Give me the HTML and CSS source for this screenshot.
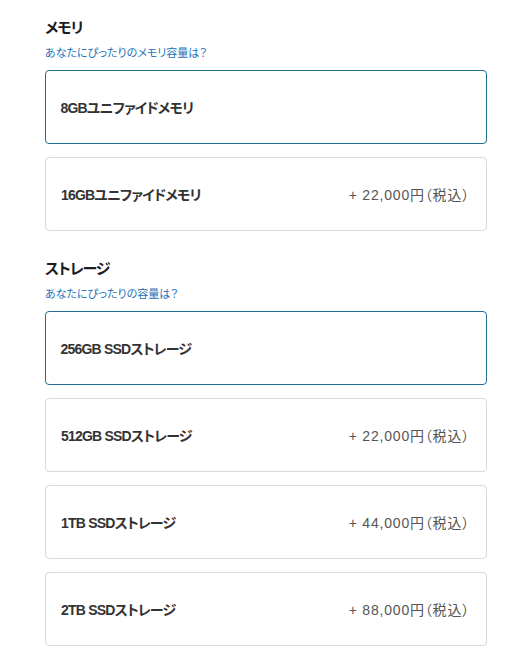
FILE: index.html
```html
<!DOCTYPE html>
<html lang="ja">
<head>
<meta charset="utf-8">
<link rel="stylesheet" href="styles.css">
</head>
<body>
<div class="page">
  <section class="group">
    <h2 class="title">メモリ</h2>
    <a class="help" href="#">あなたにぴったりのメモリ容量は？</a>
    <div class="options">
      <div class="opt selected"><span class="name">8GBユニファイドメモリ</span></div>
      <div class="opt"><span class="name">16GBユニファイドメモリ</span><span class="price">+ 22,000円（税込）</span></div>
    </div>
  </section>
  <section class="group">
    <h2 class="title">ストレージ</h2>
    <a class="help" href="#">あなたにぴったりの容量は？</a>
    <div class="options">
      <div class="opt selected"><span class="name">256GB SSDストレージ</span></div>
      <div class="opt"><span class="name">512GB SSDストレージ</span><span class="price">+ 22,000円（税込）</span></div>
      <div class="opt"><span class="name">1TB SSDストレージ</span><span class="price">+ 44,000円（税込）</span></div>
      <div class="opt"><span class="name">2TB SSDストレージ</span><span class="price">+ 88,000円（税込）</span></div>
    </div>
  </section>
</div>
</body>
</html>
```
FILE: styles.css
```css
html, body {
  margin: 0;
  padding: 0;
  background: #fff;
}
body {
  font-family: "Liberation Sans", "Noto Sans CJK JP", sans-serif;
  color: #1d1d1f;
}
.page {
  padding: 18px 38px 0 45px;
}
.group {
  display: flex;
  flex-direction: column;
  margin-bottom: 28px;
}
.title {
  margin: 0;
  font-size: 15px;
  font-weight: 700;
  line-height: 20px;
  letter-spacing: -1px;
  font-feature-settings: "palt";
  color: #1d1d1f;
}
.help {
  margin-top: 8px;
  font-size: 11px;
  line-height: 14px;
  color: #1f72b8;
  text-decoration: none;
  font-feature-settings: "palt";
}
.options {
  margin-top: 10px;
  display: flex;
  flex-direction: column;
  gap: 13px;
}
.opt {
  height: 74px;
  box-sizing: border-box;
  border: 1px solid #d9d9d9;
  border-radius: 4px;
  display: flex;
  align-items: center;
  justify-content: space-between;
  padding: 0 16px 0 15px;
}
.opt.selected {
  border: 1.5px solid #236f92;
  padding-left: 14.5px;
}
.name {
  font-size: 14px;
  font-weight: 700;
  color: #333;
  letter-spacing: -0.8px;
  font-feature-settings: "palt";
}
.price {
  font-size: 14px;
  color: #555;
  letter-spacing: 0.8px;
  font-feature-settings: "palt";
}
```
